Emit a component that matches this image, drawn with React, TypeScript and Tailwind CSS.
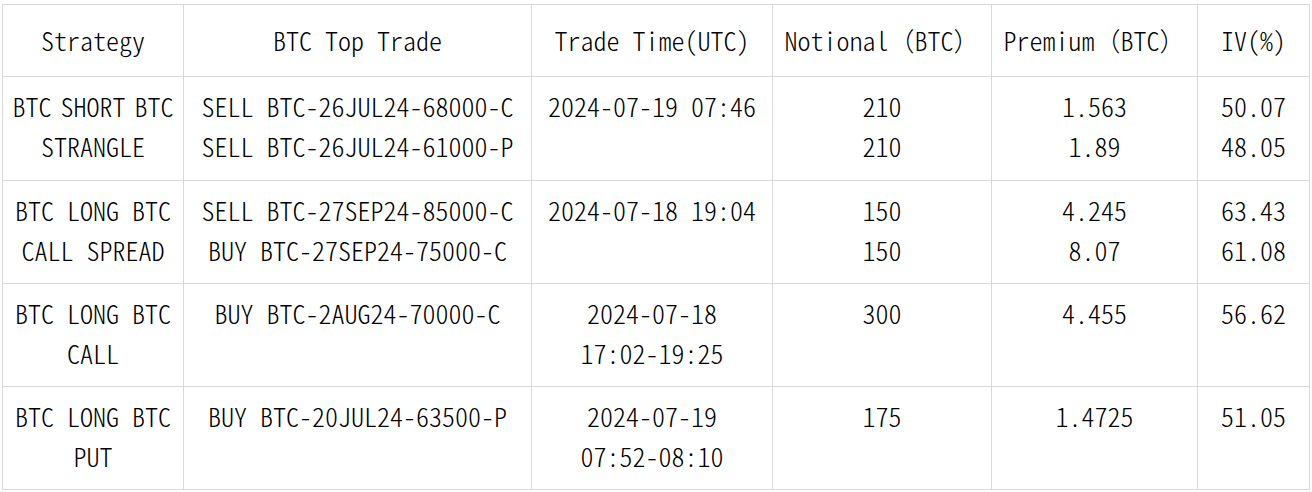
import React from "react";

const header = ["Strategy", "BTC Top Trade", "Trade Time(UTC)", "Notional（BTC）", "Premium（BTC）", "IV(%)"];

const rows: string[][][] = [
  [["BTC SHORT BTC", "STRANGLE"], ["SELL BTC-26JUL24-68000-C", "SELL BTC-26JUL24-61000-P"], ["2024-07-19 07:46"], ["210", "210"], ["1.563", "1.89"], ["50.07", "48.05"]],
  [["BTC LONG BTC", "CALL SPREAD"], ["SELL BTC-27SEP24-85000-C", "BUY BTC-27SEP24-75000-C"], ["2024-07-18 19:04"], ["150", "150"], ["4.245", "8.07"], ["63.43", "61.08"]],
  [["BTC LONG BTC", "CALL"], ["BUY BTC-2AUG24-70000-C"], ["2024-07-18", "17:02-19:25"], ["300"], ["4.455"], ["56.62"]],
  [["BTC LONG BTC", "PUT"], ["BUY BTC-20JUL24-63500-P"], ["2024-07-19", "07:52-08:10"], ["175"], ["1.4725"], ["51.05"]],
];

function Txt({ s }: { s: string }) {
  const parts = s.split(/([（）])/);
  return (
    <>
      {parts.map((p, i) =>
        p === "（" || p === "）" ? (
          <span key={i} className="[font-feature-settings:normal]">{p}</span>
        ) : (
          <span key={i}>{p}</span>
        )
      )}
    </>
  );
}

export default function App() {
  return (
    <div className="w-[1312px] h-[492px] bg-white overflow-hidden">
      <div
        className="ml-[2px] mt-[4px] w-max grid grid-cols-[181px_348px_241px_219px_206px_112px] grid-rows-[72px_104px_103px_103px_103px] border-l border-t border-[#d9d9d9] text-[26px] font-light text-[#000] font-['Noto_Sans_CJK_SC','Noto_Sans_CJK_JP',sans-serif] [font-feature-settings:'hwid']"
      >
        {header.map((h, i) => (
          <div key={i} className="flex items-center justify-center pb-[1px] border-r border-b border-[#d9d9d9] whitespace-nowrap leading-[40px]">
            <Txt s={h} />
          </div>
        ))}
        {rows.map((r, ri) =>
          r.map((cell, ci) => (
            <div key={`${ri}-${ci}`} className="flex flex-col items-center pt-[9px] border-r border-b border-[#d9d9d9]">
              {cell.map((line, li) => (
                <div
                  key={li}
                  className={
                    ri === 0 && ci === 0 && li === 0
                      ? "whitespace-pre leading-[40px] text-center [word-spacing:-4px]"
                      : "whitespace-pre leading-[40px] text-center"
                  }
                >
                  {line}
                </div>
              ))}
            </div>
          ))
        )}
      </div>
    </div>
  );
}
